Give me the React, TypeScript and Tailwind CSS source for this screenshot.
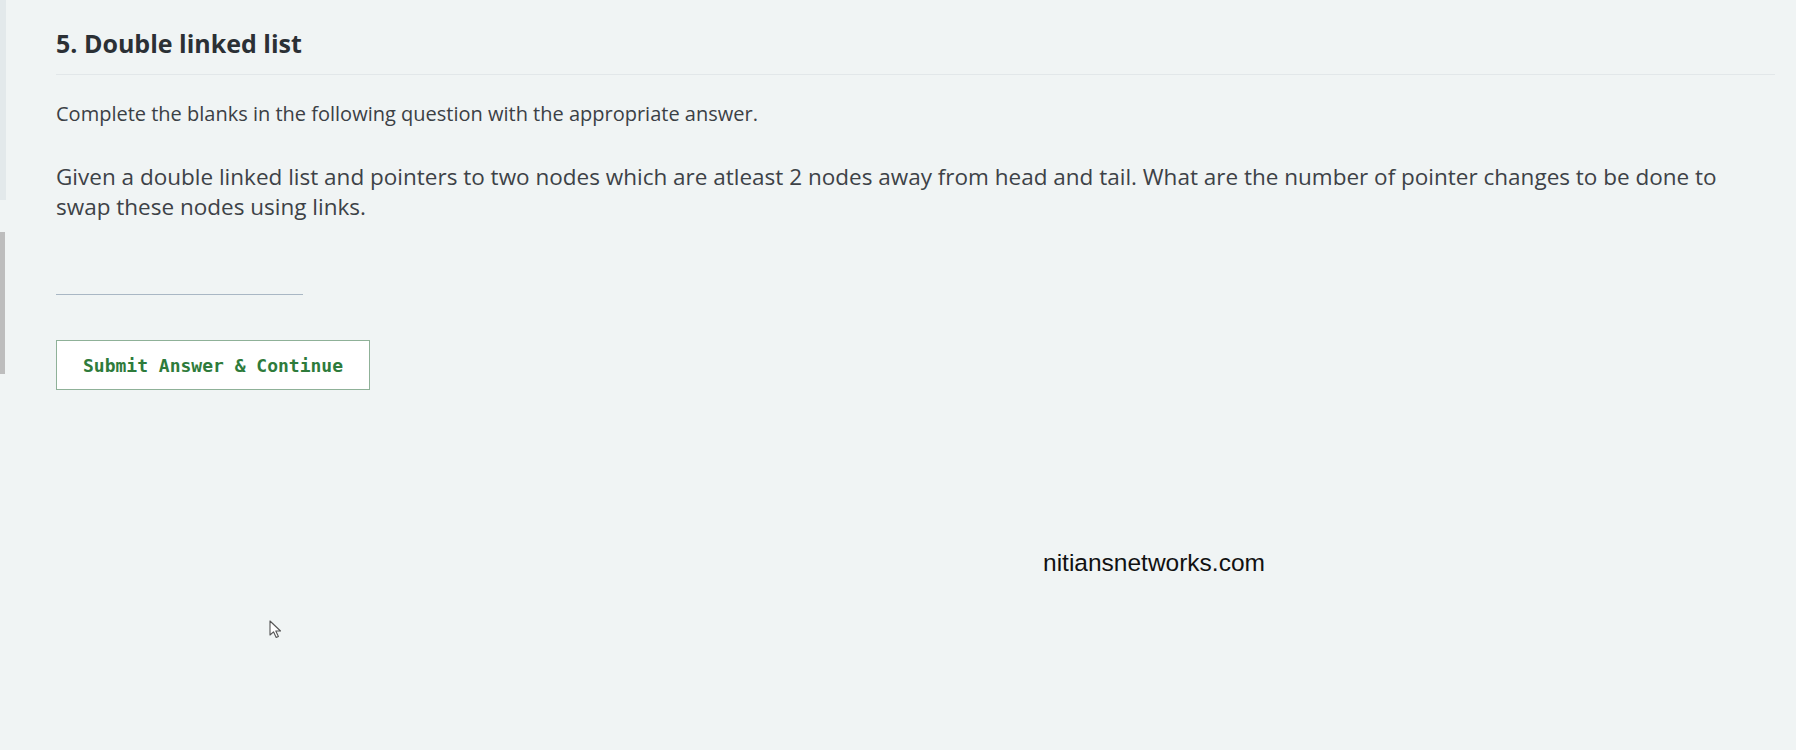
import React, { useState } from 'react';

const CursorIcon: React.FC = () => (
  <svg width="14" height="20" viewBox="0 0 14 20" fill="none">
    <path d="M1 1 L1 15 L4.5 11.8 L7.2 17.5 L9.4 16.5 L6.8 11 L11.5 11 Z" fill="#ffffff" stroke="#555" strokeWidth="1.1" strokeLinejoin="round" />
  </svg>
);

const App: React.FC = () => {
  const [answer, setAnswer] = useState('');

  return (
    <div className="relative flex min-h-screen w-full bg-[#f0f4f4] font-['Open_Sans',sans-serif]">
      <div className="flex w-[6px] shrink-0 flex-col">
        <div className="h-[200px] bg-[#e3e9eb]" />
        <div className="mt-[32px] h-[142px] w-[5px] bg-[#bdbdbd]" />
      </div>

      <div className="flex-1 pl-[50px] pr-[21px] pt-[26px]">
        <h2 className="text-[25px] leading-[34px] font-bold text-[#2b3035]">5. Double linked list</h2>
        <div className="mt-[14px] border-t border-[#e2e7e9]" />

        <p className="mt-[25px] text-[20px] leading-[28px] text-[#3b4045]">
          Complete the blanks in the following question with the appropriate answer.
        </p>

        <p className="mt-[34px] max-w-[1690px] text-[22.5px] leading-[30px] text-[#3d4247]">
          Given a double linked list and pointers to two nodes which are atleast 2 nodes away from head and tail. What are the number of pointer changes to be done to swap these nodes using links.
        </p>

        <input
          value={answer}
          onChange={e => setAnswer(e.target.value)}
          className="mt-[39px] block h-[34px] w-[247px] border-b border-[#a9b7c4] bg-transparent text-[18px] outline-none"
        />

        <button className="mt-[45px] flex h-[50px] w-[314px] items-center justify-center border border-[#8fb198] bg-white font-['DejaVu_Sans_Mono',monospace] text-[18px] font-bold text-[#2e7b3b]">
          Submit Answer &amp; Continue
        </button>
      </div>

      <div className="absolute left-[1043px] top-[548px] font-['Liberation_Sans',Arial,sans-serif] text-[24.5px] leading-[30px] text-[#111]">
        nitiansnetworks.com
      </div>
      <div className="absolute left-[269px] top-[620px]">
        <CursorIcon />
      </div>
    </div>
  );
};

export default App;
